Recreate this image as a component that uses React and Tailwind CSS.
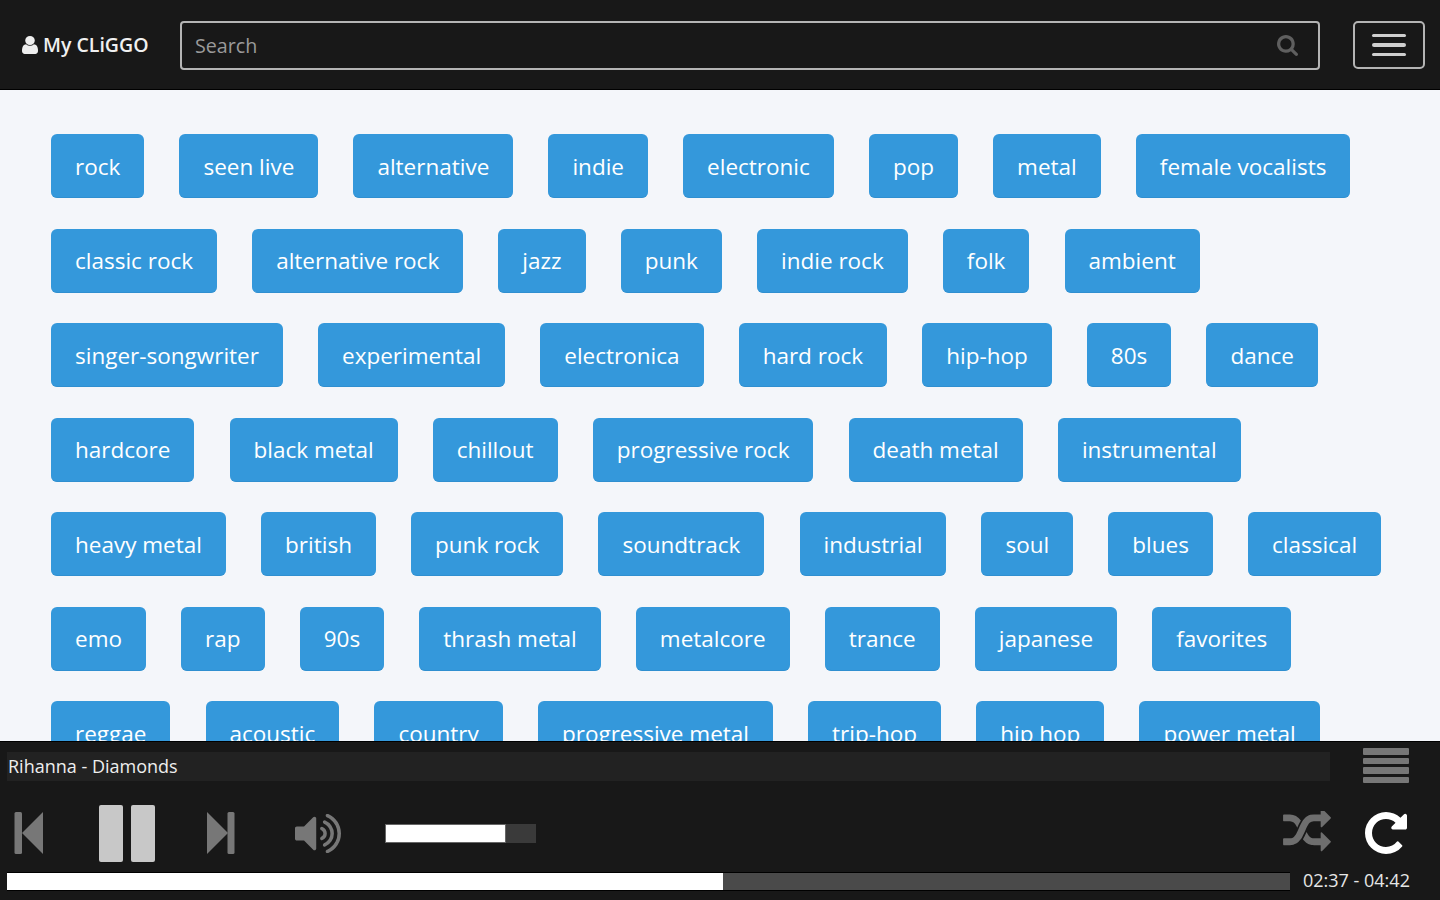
import React from "react";

const rows = [
  ["rock","seen live","alternative","indie","electronic","pop","metal","female vocalists"],
  ["classic rock","alternative rock","jazz","punk","indie rock","folk","ambient"],
  ["singer-songwriter","experimental","electronica","hard rock","hip-hop","80s","dance"],
  ["hardcore","black metal","chillout","progressive rock","death metal","instrumental"],
  ["heavy metal","british","punk rock","soundtrack","industrial","soul","blues","classical"],
  ["emo","rap","90s","thrash metal","metalcore","trance","japanese","favorites"],
  ["reggae","acoustic","country","progressive metal","trip-hop","hip hop","power metal"],
];

function Tag({ children }) {
  return (
    <a className="h-16 shrink-0 flex items-center px-6 pt-[3px] rounded-md bg-[#3498db] border-b border-[#2f8fd0] text-white text-[22.5px] leading-none whitespace-nowrap">
      {children}
    </a>
  );
}

export default function App() {
  return (
    <div className="h-screen w-full overflow-hidden flex flex-col bg-[#f4f6fa] font-['Open_Sans',sans-serif]">
      <header className="h-[90px] shrink-0 bg-[#181818] border-b border-black flex items-center pl-[22px] pr-[15px]">
        <div className="w-[158px] shrink-0 flex items-center gap-[5px] text-[#f0f0f0] text-[19.500px] font-semibold leading-none">
          <svg width="16" height="18" viewBox="256 128 1280 1536" preserveAspectRatio="none" fill="#eeeeee">
            <path d="M1536 1399q0 109-62.500 187t-150.500 78h-854q-88 0-150.500-78t-62.500-187q0-85 8.500-160.500t31.500-152 58.500-131 94-89 134.500-34.500q131 128 313 128t313-128q76 0 134.500 34.500t94 89 58.500 131 31.500 152 8.500 160.500zm-256-887q0 159-112.500 271.500t-271.500 112.500-271.500-112.500-112.500-271.500 112.500-271.500 271.500-112.500 271.500 112.500 112.500 271.500z" />
          </svg>
          <span>My CLiGGO</span>
        </div>
        <div className="flex-1 h-[49px] mt-[1px] rounded-[4px] border-2 border-[#b4b4b4] flex items-center justify-between pl-[13px] pr-[20px]">
          <span className="text-[19.700px] text-[#9a9a9a] leading-none pt-[1px]">Search</span>
          <svg width="21" height="21" viewBox="64 128 1664 1664" fill="#5f5f5f">
            <path d="M1216 832q0-185-131.500-316.500t-316.500-131.500-316.500 131.500-131.500 316.500 131.500 316.500 316.500 131.500 316.500-131.500 131.500-316.500zm512 832q0 52-38 90t-90 38q-54 0-90-38l-343-342q-179 124-399 124-143 0-273.500-55.500t-225-150-150-225-55.500-273.500 55.500-273.500 150-225 225-150 273.500-55.500 273.500 55.500 225 150 150 225 55.500 273.500q0 220-124 399l343 343q37 37 37 90z" />
          </svg>
        </div>
        <div className="ml-[33px] mt-[1px] w-[72px] h-[48px] rounded-[5px] border-2 border-[#b4b4b4] flex flex-col items-center justify-center gap-[6px]">
          <span className="w-[34px] h-[3.500px] rounded-full bg-[#cfcfcf]" />
          <span className="w-[34px] h-[3.500px] rounded-full bg-[#cfcfcf]" />
          <span className="w-[34px] h-[3.500px] rounded-full bg-[#cfcfcf]" />
        </div>
      </header>

      <main className="flex-1 min-h-0 overflow-hidden pl-[51px] pt-[44px] flex flex-col gap-[30.5px]">
        {rows.map((r, i) => (
          <div key={i} className="flex shrink-0 gap-[35.100px]">
            {r.map((t) => <Tag key={t}>{t}</Tag>)}
          </div>
        ))}
      </main>

      <footer className="h-[159px] shrink-0 bg-[#181818] border-t border-black flex flex-col">
        <div className="flex items-center pl-[7px] pt-[6px] pr-[31px]">
          <div className="flex-1 h-[29px] mt-[2px] bg-[#222222] text-[#eeeeee] text-[18px] leading-[29px] pl-px">Rihanna - Diamonds</div>
          <div className="ml-[33px] w-[46px] flex flex-col gap-[3px]">
            <span className="h-[6.500px] rounded-[1px] bg-[#777777]" />
            <span className="h-[6.500px] rounded-[1px] bg-[#777777]" />
            <span className="h-[6.500px] rounded-[1px] bg-[#777777]" />
            <span className="h-[6.500px] rounded-[1px] bg-[#777777]" />
          </div>
        </div>

        <div className="h-[89px] pt-[11px] flex items-center pl-[14px] pr-[33px]">
          <svg width="30" height="42" viewBox="0 0 30 42" fill="#777777">
            <rect x="0.500" y="0" width="7.500" height="42" rx="1.500" />
            <path d="M8 21L29 0V42Z" />
          </svg>
          <div className="ml-[55px] flex gap-[8px]">
            <span className="w-[24px] h-[57px] rounded-[2px] bg-[#c8c8c8]" />
            <span className="w-[24px] h-[57px] rounded-[2px] bg-[#c8c8c8]" />
          </div>
          <svg width="28" height="42" viewBox="0 0 28 42" fill="#777777" className="ml-[52px]">
            <path d="M0 0L21 21 0 42Z" />
            <rect x="20.500" y="0" width="7" height="42" rx="1.500" />
          </svg>
          <svg width="46" height="39" viewBox="64 192 1664 1408" preserveAspectRatio="none" fill="#777777" className="ml-[60px]">
            <path d="M832 352v1088q0 26-19 45t-45 19-45-19l-333-333h-262q-26 0-45-19t-19-45v-384q0-26 19-45t45-19h262l333-333q19-19 45-19t45 19 19 45zm384 544q0 76-42.500 141.500t-112.500 93.500q-10 5-25 5-26 0-45-18.500t-19-45.500q0-21 12-35.500t29-25 34-23 29-36 12-56.500-12-56.500-29-36-34-23-29-25-12-35.500q0-27 19-45.500t45-18.500q15 0 25 5 70 27 112.500 93t42.500 142zm256 0q0 153-85 282.500t-225 188.500q-13 5-25 5-27 0-46-19t-19-45q0-39 39-59 56-29 76-44 74-54 115.500-135.500t41.500-173.500-41.500-173.500-115.500-135.500q-20-15-76-44-39-20-39-59 0-26 19-45t45-19q13 0 26 5 140 59 225 188.500t85 282.500zm256 0q0 230-127 422.500t-338 283.500q-13 5-26 5-26 0-45-19t-19-45q0-36 39-59 7-4 22.500-10.500t22.500-10.500q46-25 82-51 123-91 192-227t69-289-69-289-192-227q-36-26-82-51-7-4-22.500-10.500t-22.500-10.500q-39-23-39-59 0-26 19-45t45-19q13 0 26 5 211 91 338 283.500t127 422.500z" />
          </svg>
          <div className="ml-[44px] w-[151px] h-[19px] bg-[#3a3a3a] flex">
            <div className="w-[121px] h-full bg-white border border-[#666666]" />
          </div>
          <div className="flex-1" />
          <svg width="48" height="41" viewBox="0 128 1792 1536" fill="#6e6e6e" className="-mt-[3px]">
            <path d="M666 481q-60 92-137 273-22-45-37-72.500t-40.500-63.500-51-56.500-63-35-81.500-14.500h-224q-14 0-23-9t-9-23v-192q0-14 9-23t23-9h224q250 0 410 225zm1126 799q0 14-9 23l-320 320q-9 9-23 9-13 0-22.500-9.500t-9.500-22.500v-192q-32 0-85 .5t-81 1-73-1-71-5-64-10.500-63-18.500-58-28.500-59-40-55-53.500-56-69q59-93 136-273 22 45 37 72.500t40.500 63.500 51 56.500 63 35 81.500 14.500h256v-192q0-14 9-23t23-9q12 0 24 10l319 319q9 9 9 23zm0-896q0 14-9 23l-320 320q-9 9-23 9-13 0-22.500-9.500t-9.500-22.500v-192h-256q-48 0-87 15t-69 45-51 61.500-45 77.500q-32 62-78 171-29 66-49.500 111t-54 105-64 100-74 83-90 68.500-106.500 42-128 16.500h-224q-14 0-23-9t-9-23v-192q0-14 9-23t23-9h224q48 0 87-15t69-45 51-61.500 45-77.500q32-62 78-171 29-66 49.500-111t54-105 64-100 74-83 90-68.500 106.500-42 128-16.500h256v-192q0-14 9-23t23-9q12 0 24 10l319 319q9 9 9 23z" />
          </svg>
          <svg width="42" height="42" viewBox="128 128 1536 1536" fill="#ffffff" className="ml-[34px]">
            <path d="M1664 256v448q0 26-19 45t-45 19h-448q-42 0-59-40-17-39 14-69l138-138q-148-137-349-137-104 0-198.500 40.500t-163.500 109.500-109.500 163.500-40.500 198.500 40.500 198.500 109.500 163.500 163.500 109.500 198.500 40.500q119 0 225-52t179-147q7-10 23-12 15 0 25 9l137 138q9 8 9.500 20.500t-7.500 22.500q-109 132-264 204.500t-327 72.500q-156 0-298-61t-245-164-164-245-61-298 61-298 164-245 245-164 298-61q147 0 284.500 55.500t244.500 156.500l130-129q29-31 70-14 39 17 39 59z" />
          </svg>
        </div>

        <div className="flex items-center pl-[7px] pr-[30px]">
          <div className="w-[1283px] h-[19px] bg-[#4a4a4a] border-y border-black flex">
            <div className="w-[716px] h-full bg-white" />
          </div>
          <span className="ml-[13px] h-[19px] text-[18px] leading-[17px] text-[#e6e6e6] whitespace-nowrap">02:37 - 04:42</span>
        </div>
      </footer>
    </div>
  );
}
